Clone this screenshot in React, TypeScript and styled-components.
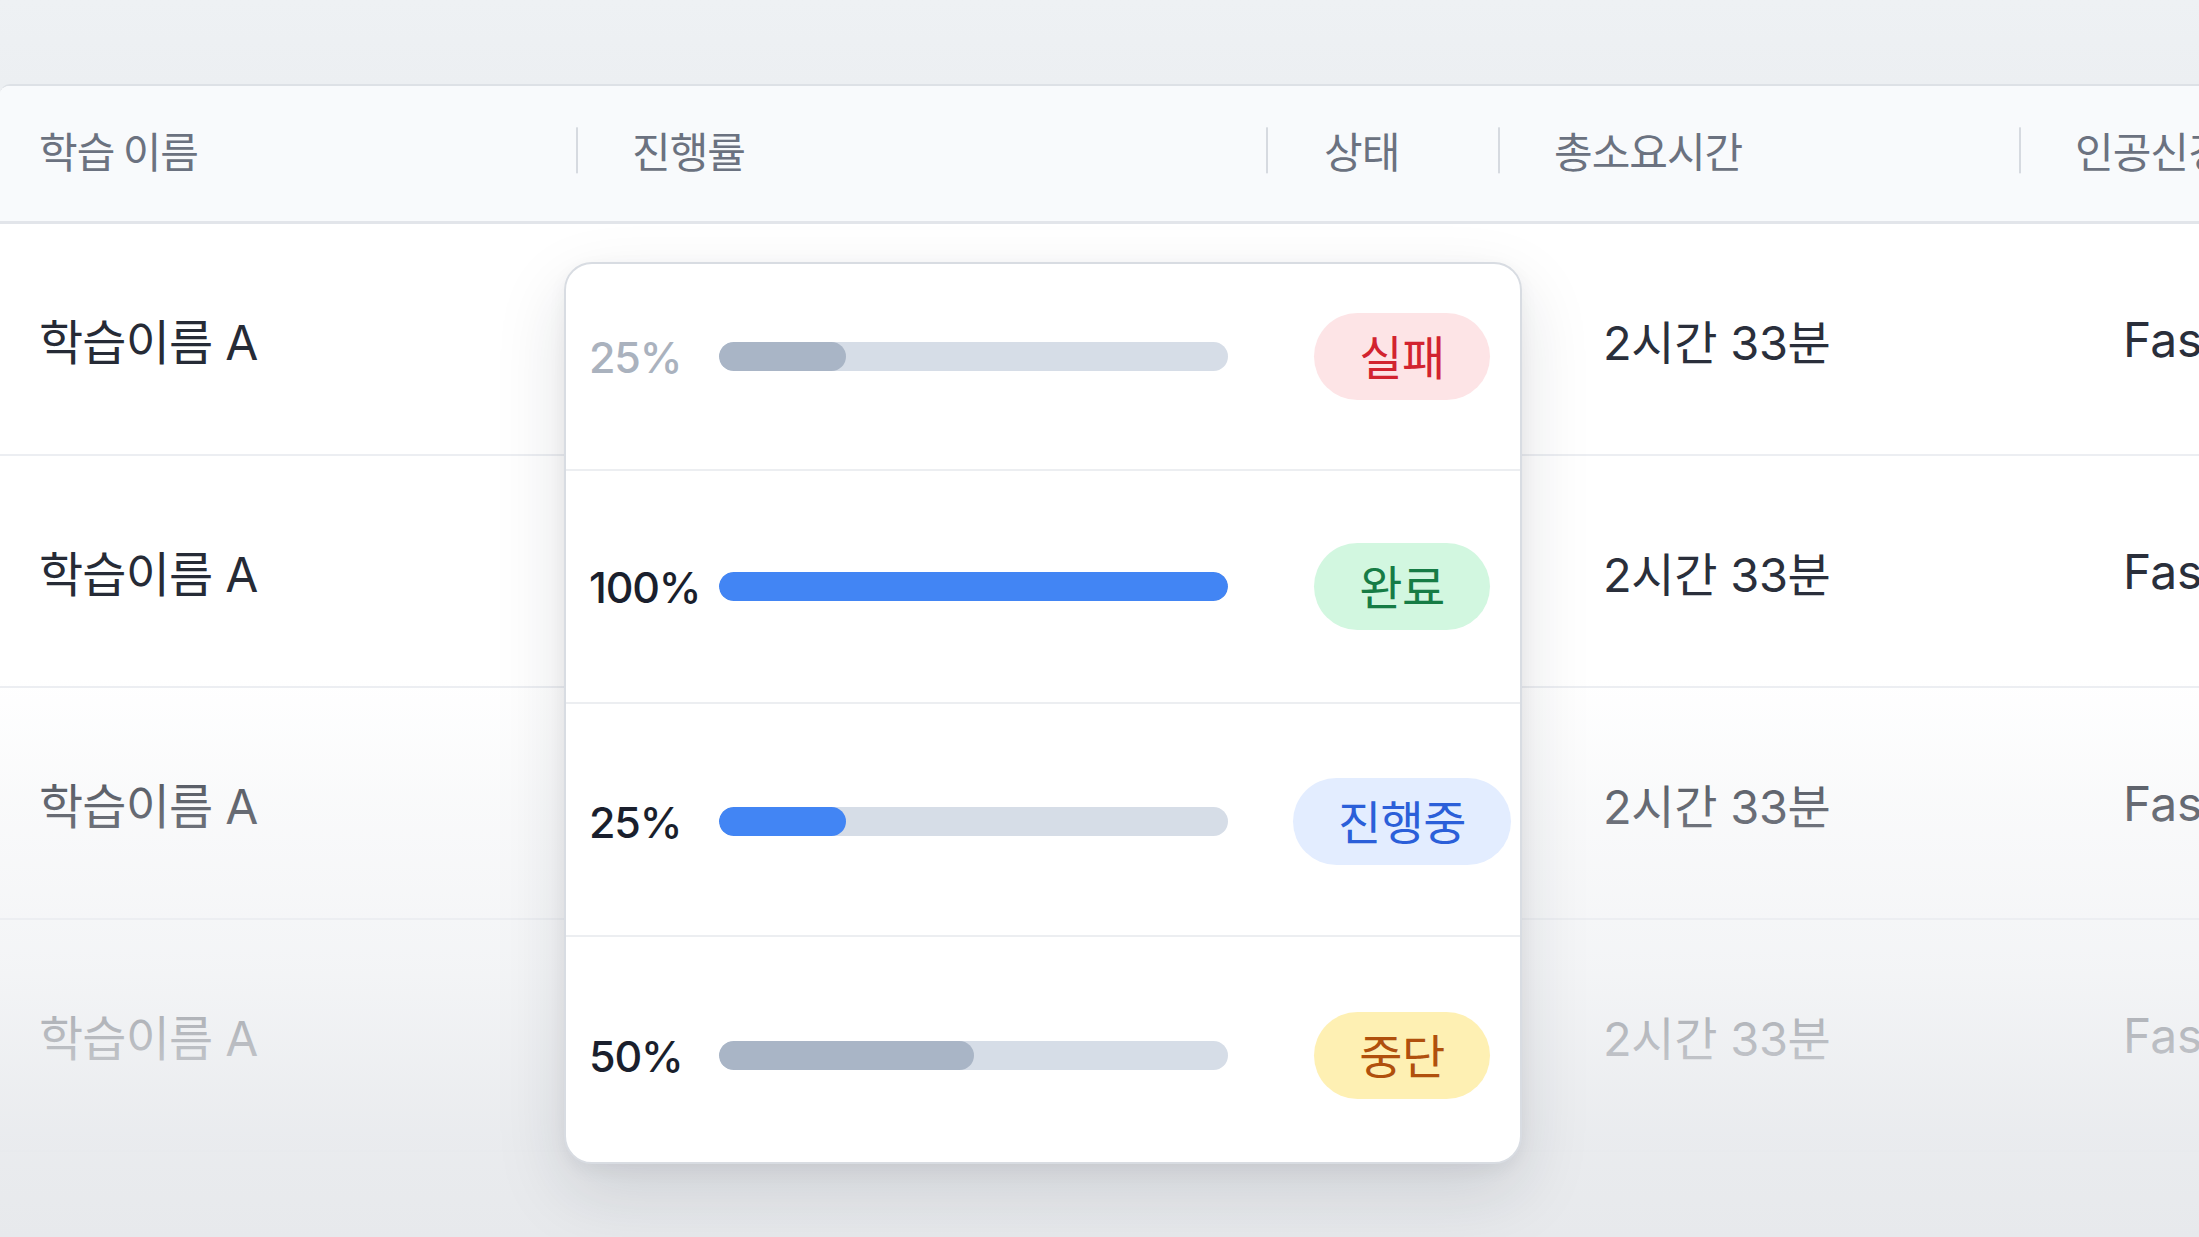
import React from "react";
import styled, { createGlobalStyle } from "styled-components";

const GlobalStyle = createGlobalStyle`
  * { box-sizing: border-box; }
  html, body { margin: 0; padding: 0; }
  body {
    background: #eef0f3;
    overflow: hidden;
    font-family: "Inter", "Noto Sans CJK KR", "Noto Sans", sans-serif;
  }
`;

type Status = "fail" | "done" | "running" | "stopped";

const badgeColors: Record<Status, { bg: string; fg: string; label: string; ghostW: number }> = {
  fail: { bg: "#fde4e6", fg: "#d2232f", label: "실패", ghostW: 178 },
  done: { bg: "#d2f7e0", fg: "#167c45", label: "완료", ghostW: 178 },
  running: { bg: "#e3edff", fg: "#2b5fd9", label: "진행중", ghostW: 224 },
  stopped: { bg: "#fef0b3", fg: "#b0500d", label: "중단", ghostW: 178 },
};

const Page = styled.div`
  position: relative;
  width: 2199px;
  height: 1237px;
  padding-top: 84px;
  overflow: hidden;
  background: linear-gradient(#eef1f4, #eceff2 84px);
`;

const TableCard = styled.div`
  position: relative;
  width: 2420px;
  height: 1153px;
  background: #ffffff;
  border-top: 2px solid #dde1e6;
  border-top-left-radius: 10px;
  overflow: hidden;
`;

const COLS = "576px 690px 232px 521px 401px";

const HeaderRow = styled.div`
  display: grid;
  grid-template-columns: ${COLS};
  height: 138px;
  align-items: center;
  background: #f8fafc;
  border-bottom: 3px solid #e2e5ea;
`;

const HeaderCell = styled.div<{ $divider?: boolean; $pad: number }>`
  position: relative;
  padding-left: ${(p) => p.$pad}px;
  padding-bottom: 8px;
  font-family: "Noto Sans CJK KR", "Noto Sans", sans-serif;
  font-size: 42px;
  font-weight: 400;
  color: #6b7280;
  letter-spacing: -1px;
  white-space: nowrap;
  &::before {
    content: "";
    display: ${(p) => (p.$divider ? "block" : "none")};
    position: absolute;
    left: 0;
    top: 50%;
    transform: translateY(-58%);
    width: 2px;
    height: 46px;
    background: #d6dae0;
  }
`;

const BodyRow = styled.div`
  display: grid;
  grid-template-columns: ${COLS};
  height: 232px;
  align-items: center;
  border-bottom: 2px solid #eceef2;
`;

const NameCell = styled.div`
  padding-left: 39px;
  font-family: "Inter", "Noto Sans CJK KR", sans-serif;
  font-size: 48px;
  color: #262b36;
  letter-spacing: -0.8px;
  white-space: nowrap;
`;

const HiddenProgress = styled.div`
  padding-left: 180px;
  display: flex;
  align-items: center;
`;

const MiniTrack = styled.div`
  width: 420px;
  height: 24px;
  border-radius: 12px;
  background: #d5dce6;
`;

const StatusCell = styled.div`
  padding-left: 51px;
  display: flex;
  align-items: center;
`;

const GhostBadge = styled.div<{ $status: Status }>`
  width: ${(p) => badgeColors[p.$status].ghostW}px;
  height: 90px;
  border-radius: 45px;
  background: ${(p) => badgeColors[p.$status].bg};
  filter: blur(1px);
`;

const TimeCell = styled.div`
  padding-left: 105px;
  font-family: "Inter", "Noto Sans CJK KR", sans-serif;
  font-size: 47px;
  color: #2a2f3b;
  letter-spacing: -0.3px;
  white-space: nowrap;
`;

const ModelCell = styled.div`
  padding-left: 104px;
  font-family: "Inter", sans-serif;
  font-size: 48px;
  color: #2a2f3b;
  white-space: nowrap;
`;

const Fade = styled.div`
  position: absolute;
  left: 0;
  right: 0;
  bottom: 0;
  height: 560px;
  pointer-events: none;
  background: linear-gradient(
    to bottom,
    rgba(236, 238, 241, 0) 0%,
    rgba(236, 238, 241, 0.3) 22%,
    rgba(236, 238, 241, 0.62) 52%,
    rgba(232, 234, 237, 0.92) 82%,
    #e7e9ec 100%
  );
`;

const Popup = styled.div`
  position: absolute;
  left: 564px;
  top: 262px;
  width: 958px;
  height: 902px;
  z-index: 2;
  background: #ffffff;
  border: 2px solid #d8dce2;
  border-radius: 28px;
  box-shadow: 0 28px 70px rgba(20, 28, 45, 0.13), 0 6px 18px rgba(20, 28, 45, 0.05);
`;

const PopupRow = styled.div<{ $h: number; $pt?: number; $pb?: number; $last?: boolean }>`
  display: grid;
  grid-template-columns: 130px 509px 1fr;
  align-items: center;
  height: ${(p) => p.$h}px;
  padding: ${(p) => p.$pt ?? 0}px 0 ${(p) => p.$pb ?? 0}px 23px;
  border-bottom: ${(p) => (p.$last ? "none" : "2px solid #eceef1")};
`;

const Pct = styled.div<{ $muted?: boolean }>`
  font-family: "Inter", sans-serif;
  font-size: 43px;
  font-weight: 500;
  letter-spacing: -1.2px;
  color: ${(p) => (p.$muted ? "#aab2be" : "#1a1f2d")};
`;

const Track = styled.div`
  position: relative;
  height: 29px;
  border-radius: 15px;
  background: #d6dde7;
  overflow: hidden;
`;

const Fill = styled.div<{ $tone: "blue" | "gray" }>`
  height: 100%;
  border-radius: 15px;
  background: ${(p) => (p.$tone === "blue" ? "#4285f4" : "#a9b5c6")};
`;

const BadgeCell = styled.div`
  padding-left: 56px;
  display: flex;
  justify-content: center;
  align-items: center;
`;

const Badge = styled.div<{ $status: Status }>`
  height: 87px;
  padding: 0 45px 4px;
  border-radius: 44px;
  display: flex;
  align-items: center;
  font-family: "Noto Sans CJK KR", sans-serif;
  font-size: 47px;
  font-weight: 400;
  letter-spacing: -0.5px;
  white-space: nowrap;
  background: ${(p) => badgeColors[p.$status].bg};
  color: ${(p) => badgeColors[p.$status].fg};
`;

const rows: { status: Status; pct: number }[] = [
  { status: "fail", pct: 25 },
  { status: "done", pct: 100 },
  { status: "running", pct: 25 },
  { status: "stopped", pct: 50 },
];

const popupRowLayout = [
  { h: 207, pt: 0, pb: 20 },
  { h: 233, pt: 0, pb: 0 },
  { h: 233, pt: 4, pb: 0 },
  { h: 225, pt: 12, pb: 0 },
];

export default function App() {
  return (
    <>
      <GlobalStyle />
      <Page>
        <TableCard>
          <HeaderRow>
            <HeaderCell $pad={39}>학습 이름</HeaderCell>
            <HeaderCell $divider $pad={56}>진행률</HeaderCell>
            <HeaderCell $divider $pad={58}>상태</HeaderCell>
            <HeaderCell $divider $pad={56}>총소요시간</HeaderCell>
            <HeaderCell $divider $pad={56}>인공신경망</HeaderCell>
          </HeaderRow>
          {rows.map((r, i) => (
            <BodyRow key={i}>
              <NameCell>학습이름 A</NameCell>
              <HiddenProgress>
                <MiniTrack />
              </HiddenProgress>
              <StatusCell>
                <GhostBadge $status={r.status} />
              </StatusCell>
              <TimeCell>2시간 33분</TimeCell>
              <ModelCell>FastText</ModelCell>
            </BodyRow>
          ))}
          <Fade />
        </TableCard>

        <Popup>
          {rows.map((r, i) => {
            const l = popupRowLayout[i];
            const tone = r.status === "done" || r.status === "running" ? "blue" : "gray";
            return (
              <PopupRow key={i} $h={l.h} $pt={l.pt} $pb={l.pb} $last={i === rows.length - 1}>
                <Pct $muted={i === 0}>{r.pct}%</Pct>
                <Track>
                  <Fill $tone={tone} style={{ width: `${r.pct}%` }} />
                </Track>
                <BadgeCell>
                  <Badge $status={r.status}>{badgeColors[r.status].label}</Badge>
                </BadgeCell>
              </PopupRow>
            );
          })}
        </Popup>
      </Page>
    </>
  );
}
